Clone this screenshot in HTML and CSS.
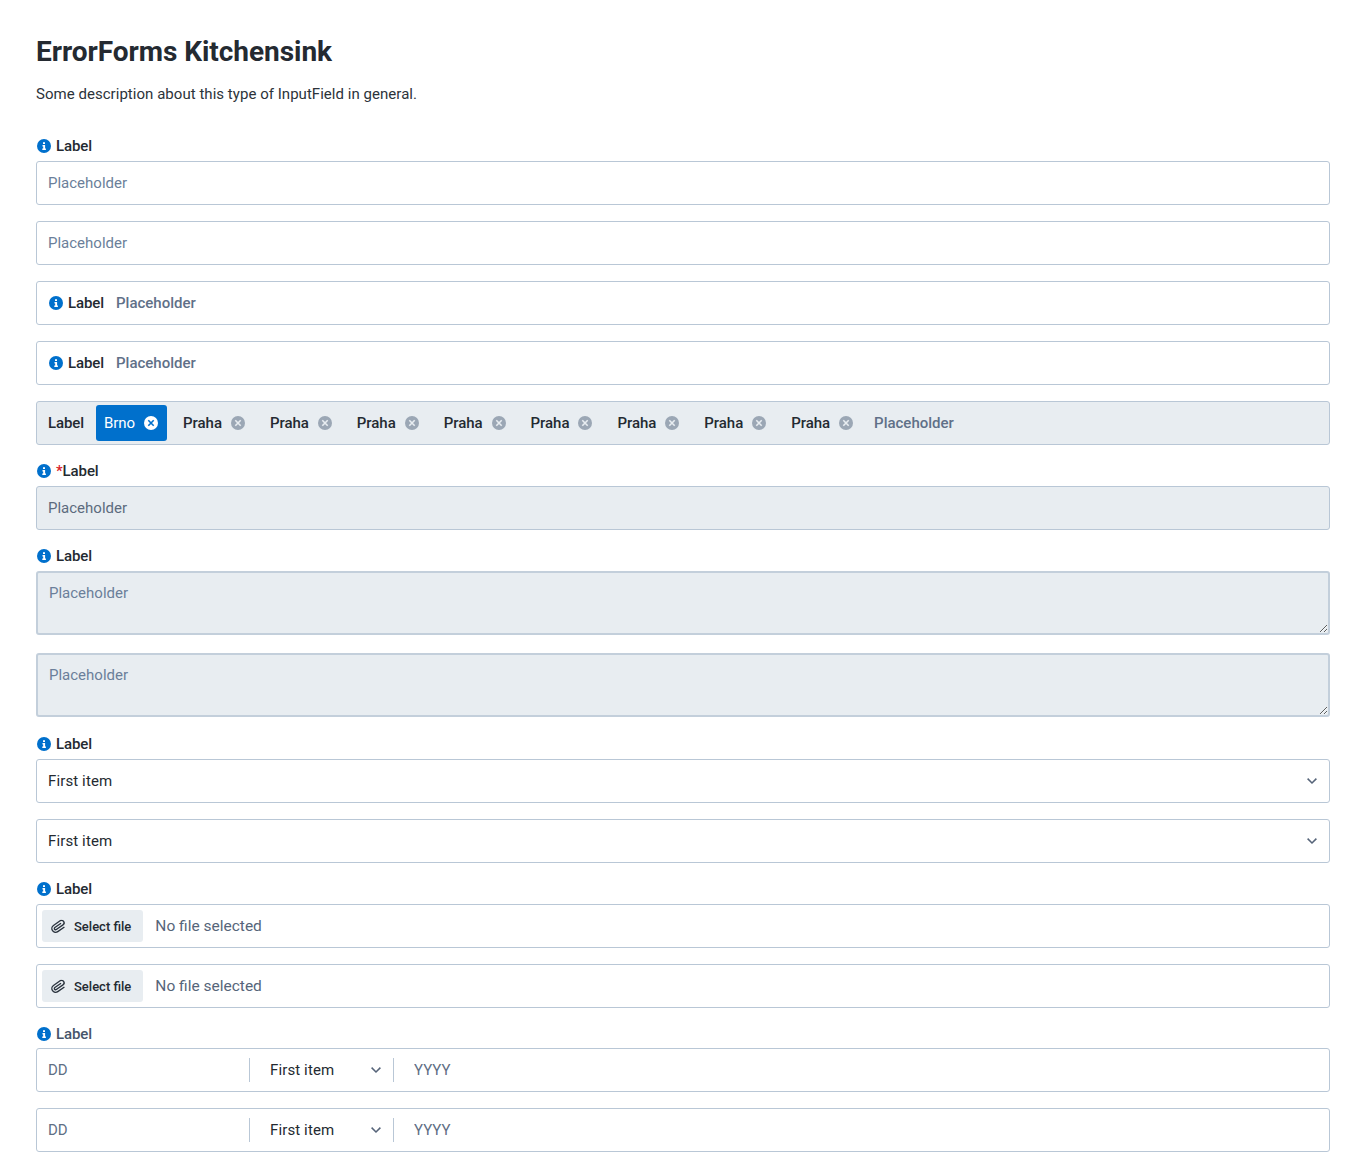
FILE: index.html
```html
<!DOCTYPE html>
<html lang="en">
<head>
  <meta charset="UTF-8" />
  <title>ErrorForms Kitchensink</title>
  <link rel="stylesheet" href="styles.css">
</head>
<body>
  <svg class="defs" width="0" height="0">
    <symbol id="info" viewBox="0 0 14 14">
      <circle cx="7" cy="7" r="7" fill="#0070cc"/>
      <path d="M6 3.2h2v1.7H6zM5.5 6h2.6v3.6h.8V11H5.3V9.6h.9V7.4h-.7z" fill="#fff"/>
    </symbol>
    <symbol id="clear" viewBox="0 0 14 14">
      <circle cx="7" cy="7" r="7" fill="currentColor"/>
      <path d="M4.3 4.3l5.4 5.4M9.7 4.3l-5.4 5.4" stroke="var(--cross)" stroke-width="1.6" fill="none"/>
    </symbol>
    <symbol id="chevron" viewBox="0 0 12 8">
      <path d="M1.6 1.6L6 6l4.4-4.4" stroke="#566479" stroke-width="1.5" fill="none"/>
    </symbol>
    <symbol id="clip" viewBox="0 0 24 24">
      <path d="M21.44 11.05l-9.19 9.19a6 6 0 0 1-8.49-8.49l9.19-9.19a4 4 0 0 1 5.66 5.66l-9.2 9.19a2 2 0 0 1-2.83-2.83l8.49-8.48" stroke="#2c3540" stroke-width="2.2" fill="none"/>
    </symbol>
  </svg>

  <h1>ErrorForms Kitchensink</h1>
  <p class="intro">Some description about this type of InputField in general.</p>

  <label class="label"><svg class="icon"><use href="#info"/></svg>Label</label>
  <input class="field" type="text" placeholder="Placeholder" />

  <input class="field spaced" type="text" placeholder="Placeholder" />

  <div class="field inline spaced">
    <span class="inline-label"><svg class="icon"><use href="#info"/></svg>Label</span>
    <input class="bare strong" type="text" placeholder="Placeholder" />
  </div>

  <div class="field inline spaced">
    <span class="inline-label"><svg class="icon"><use href="#info"/></svg>Label</span>
    <input class="bare strong" type="text" placeholder="Placeholder" />
  </div>

  <div class="field inline muted spaced">
    <span class="chips-label">Label</span>
    <span class="chip active">Brno<svg class="icon"><use href="#clear"/></svg></span>
    <span class="chip">Praha<svg class="icon"><use href="#clear"/></svg></span>
    <span class="chip">Praha<svg class="icon"><use href="#clear"/></svg></span>
    <span class="chip">Praha<svg class="icon"><use href="#clear"/></svg></span>
    <span class="chip">Praha<svg class="icon"><use href="#clear"/></svg></span>
    <span class="chip">Praha<svg class="icon"><use href="#clear"/></svg></span>
    <span class="chip">Praha<svg class="icon"><use href="#clear"/></svg></span>
    <span class="chip">Praha<svg class="icon"><use href="#clear"/></svg></span>
    <span class="chip">Praha<svg class="icon"><use href="#clear"/></svg></span>
    <input class="bare strong chips-input" type="text" placeholder="Placeholder" />
  </div>

  <label class="label group"><svg class="icon"><use href="#info"/></svg><span class="req">*</span>Label</label>
  <input class="field muted" type="text" placeholder="Placeholder" />

  <label class="label group"><svg class="icon"><use href="#info"/></svg>Label</label>
  <textarea class="area" placeholder="Placeholder"></textarea>
  <textarea class="area second" placeholder="Placeholder"></textarea>

  <label class="label group after-area"><svg class="icon"><use href="#info"/></svg>Label</label>
  <div class="select-wrap">
    <select class="field"><option>First item</option></select>
    <svg class="chevron"><use href="#chevron"/></svg>
  </div>
  <div class="select-wrap spaced">
    <select class="field"><option>First item</option></select>
    <svg class="chevron"><use href="#chevron"/></svg>
  </div>

  <label class="label group"><svg class="icon"><use href="#info"/></svg>Label</label>
  <div class="field file">
    <button class="file-btn" type="button"><svg class="clip"><use href="#clip"/></svg>Select file</button>
    <span class="file-name">No file selected</span>
  </div>
  <div class="field file spaced">
    <button class="file-btn" type="button"><svg class="clip"><use href="#clip"/></svg>Select file</button>
    <span class="file-name">No file selected</span>
  </div>

  <label class="label group last"><svg class="icon"><use href="#info"/></svg>Label</label>
  <div class="field date">
    <input class="bare day" type="text" placeholder="DD" />
    <div class="select-wrap month">
      <select class="bare"><option>First item</option></select>
      <svg class="chevron"><use href="#chevron"/></svg>
    </div>
    <input class="bare year" type="text" placeholder="YYYY" />
  </div>
  <div class="field date spaced">
    <input class="bare day" type="text" placeholder="DD" />
    <div class="select-wrap month">
      <select class="bare"><option>First item</option></select>
      <svg class="chevron"><use href="#chevron"/></svg>
    </div>
    <input class="bare year" type="text" placeholder="YYYY" />
  </div>
</body>
</html>
```

FILE: styles.css
```css
* {
  box-sizing: border-box;
}
body {
  margin: 0;
  padding: 37px 20px 20px 36px;
  font-family: Roboto, sans-serif;
  color: #242a31;
  background-color: #fff;
}
.defs {
  position: absolute;
}
h1 {
  margin: 0;
  font-size: 28px;
  line-height: 30px;
  font-weight: 700;
  letter-spacing: -0.04px;
}
.intro {
  margin: 16px 0 0;
  font-size: 15px;
  line-height: 22px;
  letter-spacing: 0.035px;
  color: #2c333a;
}
.label {
  display: flex;
  align-items: center;
  gap: 5px;
  height: 25px;
  padding: 0 0 5px 1px;
  margin-top: 31px;
  font-size: 15px;
  font-weight: 500;
  letter-spacing: -0.1px;
}
.label.group {
  margin-top: 16px;
}
.label.after-area {
  margin-top: 17px;
}
.label.last {
  height: 24px;
  padding-bottom: 4px;
  color: #46546a;
}
.req {
  color: #d9202a;
  margin-right: -5px;
}
.icon {
  width: 14px;
  height: 14px;
  flex: none;
}
input, select, textarea, button {
  font-family: inherit;
  font-size: 15px;
  color: inherit;
  outline: none;
}
input::placeholder, textarea::placeholder {
  color: #6b7f9a;
  opacity: 1;
}
.field {
  display: block;
  width: 100%;
  height: 44px;
  padding: 0 11px;
  border: 1px solid #b9c7d6;
  border-radius: 3px;
  background-color: #fff;
}
.spaced {
  margin-top: 16px;
}
.inline {
  display: flex;
  align-items: center;
}
.muted {
  background-color: #e8edf1;
}
.muted::placeholder {
  color: #5c6b7e;
}
.bare {
  border: none;
  background: transparent;
  padding: 0;
  height: 100%;
}
.strong {
  flex: 1;
  font-weight: 500;
}
.strong::placeholder {
  color: #5f7088;
}
.inline-label {
  display: flex;
  align-items: center;
  gap: 5px;
  padding-left: 1px;
  margin-right: 12px;
  font-size: 15px;
  font-weight: 500;
  letter-spacing: -0.1px;
}
.chips-label {
  margin-right: 12px;
  font-size: 15px;
  font-weight: 500;
  letter-spacing: -0.1px;
}
.chip {
  display: flex;
  align-items: center;
  gap: 9px;
  height: 36px;
  padding: 0 9px 0 8px;
  margin-right: 8px;
  border-radius: 3px;
  font-size: 15px;
  font-weight: 500;
  letter-spacing: -0.05px;
  color: #242a31;
  --cross: #e8edf1;
}
.chip .icon {
  color: #9ba7b5;
}
.chip.active {
  background-color: #0070cc;
  color: #fff;
  font-weight: 400;
  --cross: #0070cc;
}
.chip.active .icon {
  color: #fff;
}
.chips-input {
  margin-left: 4px;
}
.area {
  display: block;
  width: 100%;
  height: 64px;
  padding: 11px 11px;
  border: 2px solid #c3cfdb;
  border-radius: 3px;
  background-color: #e8edf1;
  resize: vertical;
}
.area.second {
  margin-top: 18px;
}
.select-wrap {
  position: relative;
}
select {
  appearance: none;
  letter-spacing: 0.12px;
}
.chevron {
  position: absolute;
  right: 12px;
  top: 18px;
  width: 12px;
  height: 8px;
}
.file {
  display: flex;
  align-items: center;
  padding: 0 0 0 5px;
}
.file-btn {
  display: flex;
  align-items: center;
  gap: 8px;
  height: 32px;
  padding: 1px 12px 0 9px;
  border: none;
  border-radius: 3px;
  background-color: #e8edf1;
  font-size: 13px;
  font-weight: 500;
}
.clip {
  width: 15px;
  height: 15px;
  transform: rotate(10deg);
}
.file-name {
  margin-left: 12px;
  font-size: 15.5px;
  color: #56657a;
}
.date {
  display: flex;
  align-items: center;
}
.date .day {
  width: 201px;
}
.date .day::placeholder, .date .year::placeholder {
  color: #5f6f85;
}
.month {
  width: 145px;
  height: 24px;
  padding-left: 20px;
  border-left: 1px solid #b9c7d6;
  border-right: 1px solid #b9c7d6;
}
.month select {
  width: 100%;
}
.month .chevron {
  right: 11px;
  top: 8px;
}
.date .year {
  flex: 1;
  margin-left: 20px;
}
```
